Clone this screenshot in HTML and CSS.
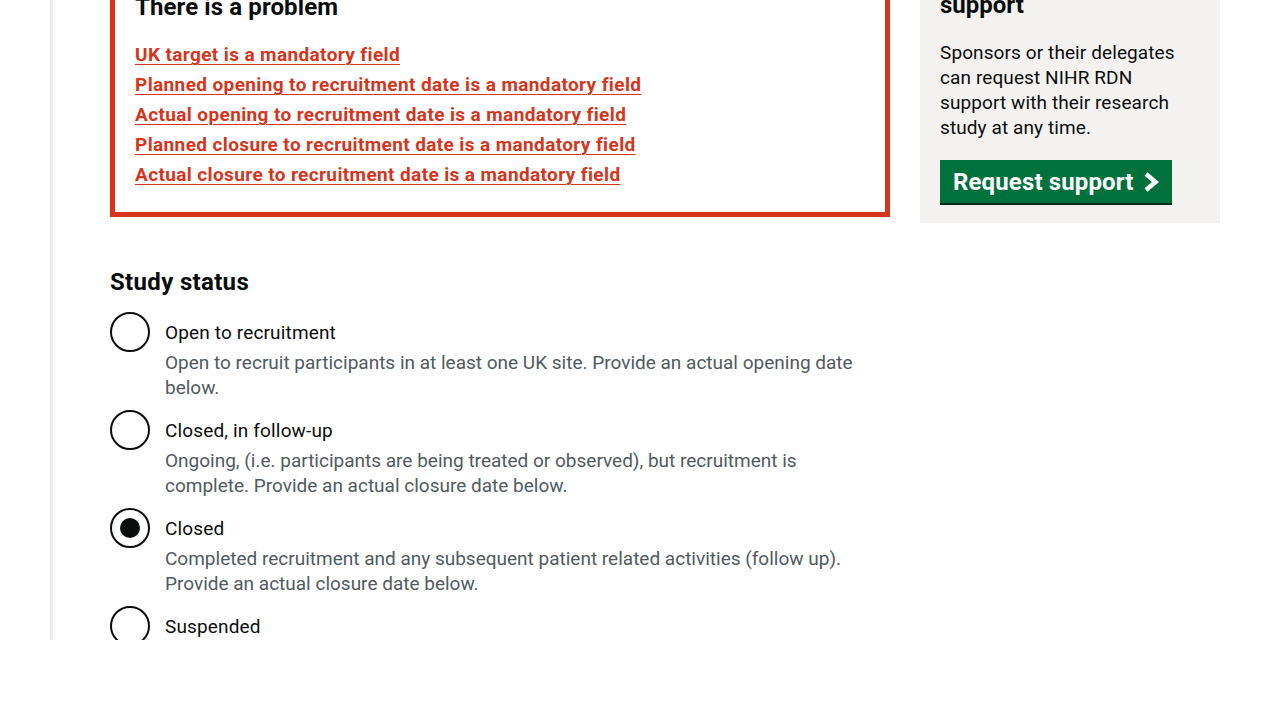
FILE: index.html
```html
<!DOCTYPE html>
<html lang="en">
<head>
<meta charset="utf-8">
<title>Update study status</title>
<link rel="stylesheet" href="styles.css">
</head>
<body>
<div class="viewport">
  <div class="page">
    <div class="columns">
      <main class="main">
        <div class="error-summary" role="alert">
          <h2 class="error-summary__title">There is a problem</h2>
          <ul class="error-summary__list">
            <li><a href="#uk-target">UK target is a mandatory field</a></li>
            <li><a href="#planned-opening">Planned opening to recruitment date is a mandatory field</a></li>
            <li><a href="#actual-opening">Actual opening to recruitment date is a mandatory field</a></li>
            <li><a href="#planned-closure">Planned closure to recruitment date is a mandatory field</a></li>
            <li><a href="#actual-closure">Actual closure to recruitment date is a mandatory field</a></li>
          </ul>
        </div>

        <fieldset class="fieldset">
          <legend class="legend">Study status</legend>
          <div class="radios">
            <div class="radio-item">
              <span class="radio"></span>
              <label class="radio-label">Open to recruitment</label>
              <div class="radio-hint">Open to recruit participants in at least one UK site. Provide an actual opening date below.</div>
            </div>
            <div class="radio-item">
              <span class="radio"></span>
              <label class="radio-label">Closed, in follow-up</label>
              <div class="radio-hint">Ongoing, (i.e. participants are being treated or observed), but recruitment is complete. Provide an actual closure date below.</div>
            </div>
            <div class="radio-item">
              <span class="radio radio--checked"><span class="radio-dot"></span></span>
              <label class="radio-label">Closed</label>
              <div class="radio-hint">Completed recruitment and any subsequent patient related activities (follow up). Provide an actual closure date below.</div>
            </div>
            <div class="radio-item">
              <span class="radio"></span>
              <label class="radio-label">Suspended</label>
              <div class="radio-hint">Recruitment has been paused temporarily.</div>
            </div>
          </div>
        </fieldset>
      </main>

      <aside class="sidebar">
        <div class="panel">
          <h2 class="panel__title">Request NIHR RDN support</h2>
          <p class="panel__text">Sponsors or their delegates can request NIHR RDN support with their research study at any time.</p>
          <a class="button" href="#request">
            <span>Request support</span>
            <svg class="button__icon" width="16" height="20" viewBox="0 0 16 20" aria-hidden="true">
              <polyline points="3,2 12.5,10 3,18" fill="none" stroke="#ffffff" stroke-width="4.6"/>
            </svg>
          </a>
        </div>
      </aside>
    </div>
  </div>
</div>
</body>
</html>
```

FILE: styles.css
```css
* {
  box-sizing: border-box;
}

html, body {
  margin: 0;
  padding: 0;
  background: #ffffff;
}

body {
  font-family: Roboto, "Liberation Sans", Arial, sans-serif;
  color: #0b0c0c;
  -webkit-font-smoothing: antialiased;
}

.viewport {
  height: 640px;
  overflow: hidden;
}

.page {
  display: flow-root;
  height: 100%;
  margin-left: 50px;
  padding: 0 60px;
  background: linear-gradient(to right, #e4e4e4 0, #ededed 2px, #f6f6f6 4px, #ffffff 7px) no-repeat left top / 8px 100%;
}

.columns {
  display: flex;
  align-items: flex-start;
  gap: 30px;
  margin-top: -60px;
}

.main {
  width: 780px;
  flex: none;
}

.sidebar {
  width: 300px;
  flex: none;
}

/* Error summary */
.error-summary {
  margin-top: 27px;
  margin-bottom: 50px;
  padding: 20px;
  border: 5px solid #d4351c;
}

.error-summary__title {
  margin: 0 0 20px;
  font-size: 24px;
  line-height: 30px;
  font-weight: 700;
  letter-spacing: 0.1px;
}

.error-summary__list {
  list-style: none;
  margin: 0;
  padding: 0;
}

.error-summary__list li {
  margin-bottom: 5px;
  font-size: 19px;
  line-height: 25px;
  font-weight: 700;
  letter-spacing: 0.38px;
}

.error-summary__list a {
  color: #d4351c;
  text-decoration: underline;
  text-decoration-thickness: 1px;
  text-underline-offset: 3px;
}

/* Fieldset & radios */
.fieldset {
  margin: 0;
  padding: 0;
  border: 0;
  min-width: 0;
}

.legend {
  padding: 0;
  margin-bottom: 15px;
  font-size: 24px;
  line-height: 30px;
  font-weight: 700;
  letter-spacing: 0.33px;
}

.radio-item {
  display: grid;
  grid-template-columns: 40px 1fr;
  margin-bottom: 10px;
}

.radio {
  grid-column: 1;
  grid-row: 1 / span 2;
  align-self: start;
  width: 40px;
  height: 40px;
  border: 2px solid #0b0c0c;
  border-radius: 50%;
  display: flex;
  align-items: center;
  justify-content: center;
  background: #ffffff;
}

.radio-dot {
  width: 20px;
  height: 20px;
  border-radius: 50%;
  background: #0b0c0c;
}

.radio-label {
  grid-column: 2;
  padding: 8px 15px 5px;
  font-size: 19px;
  line-height: 25px;
  color: #0b0c0c;
  letter-spacing: 0.15px;
}

.radio-hint {
  grid-column: 2;
  padding: 0 15px;
  font-size: 19px;
  line-height: 25px;
  color: #505a5f;
}

/* Sidebar panel */
.panel {
  background: #f3f2f1;
  padding: 20px;
}

.panel__title {
  margin: 0 0 20px;
  font-size: 24px;
  line-height: 30px;
  font-weight: 700;
}

.panel__text {
  margin: 0 0 20px;
  font-size: 19px;
  line-height: 25px;
  letter-spacing: 0.1px;
}

.button {
  display: flex;
  width: max-content;
  align-items: center;
  gap: 10px;
  padding: 7px 13px 6px;
  background: #00703c;
  color: #ffffff;
  font-size: 24px;
  line-height: 30px;
  font-weight: 700;
  letter-spacing: 0.13px;
  text-decoration: none;
  box-shadow: 0 2px 0 #002d18;
}

.button__icon {
  display: block;
  flex: none;
}
```
